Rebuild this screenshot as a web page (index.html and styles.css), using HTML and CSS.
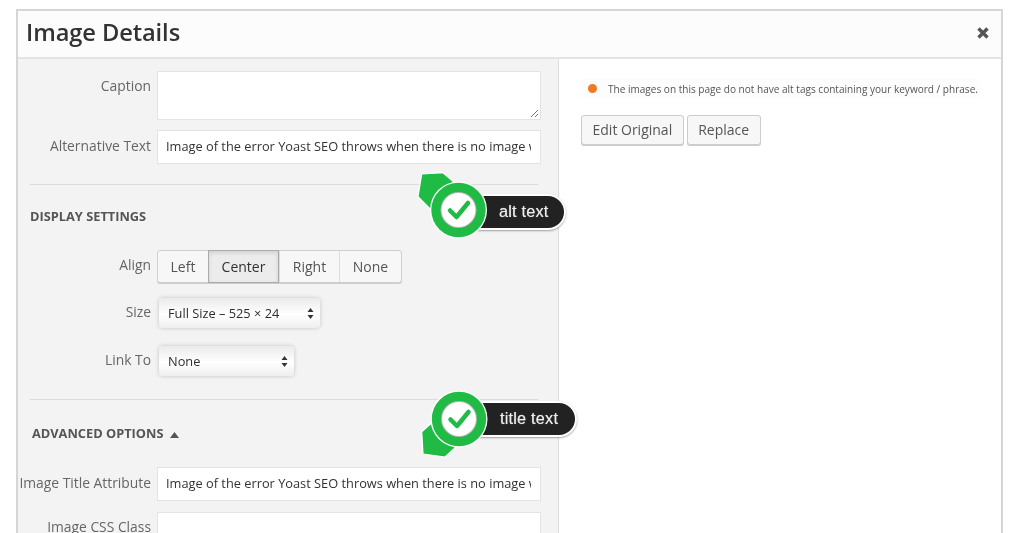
FILE: index.html
```html
<!DOCTYPE html>
<html lang="en">
<head>
<meta charset="utf-8">
<title>Image Details</title>
<link rel="stylesheet" href="styles.css">
</head>
<body>
<div class="modal">
  <header class="head">
    <h1>Image Details</h1>
    <svg class="close" width="14" height="14" viewBox="0 0 14 14"><path d="M2.500 2.500 11.500 11.500M11.500 2.500 2.500 11.500" fill="none" stroke="#555" stroke-width="3.400"/></svg>
  </header>
  <div class="body">
    <section class="left">
      <div class="row row-caption">
        <label class="label">Caption</label>
        <div class="field area">
          <svg class="grip" width="9" height="9" viewBox="0 0 9 9"><path d="M1 8 8 1M5 8 8 5" stroke="#777" stroke-width="1" fill="none"/></svg>
        </div>
      </div>
      <div class="row row-alt">
        <label class="label">Alternative Text</label>
        <div class="field input"><div class="clip">Image of the error Yoast SEO throws when there is no image with alt text</div></div>
      </div>
      <hr class="rule rule-a">
      <h2 class="section section-display">DISPLAY SETTINGS</h2>
      <div class="row row-align">
        <label class="label">Align</label>
        <div class="group">
          <span class="seg seg-left">Left</span>
          <span class="seg seg-center on">Center</span>
          <span class="seg seg-right">Right</span>
          <span class="seg seg-none">None</span>
        </div>
      </div>
      <div class="row row-size">
        <label class="label">Size</label>
        <div class="select select-size"><span>Full Size – 525 × 24</span>
          <svg width="7" height="11" viewBox="0 0 7 11"><path d="M3.500 0 6.500 4H.5ZM3.500 11 .5 7H6.500Z" fill="#333"/></svg>
        </div>
      </div>
      <div class="row row-link">
        <label class="label">Link To</label>
        <div class="select select-link"><span>None</span>
          <svg width="7" height="11" viewBox="0 0 7 11"><path d="M3.500 0 6.500 4H.5ZM3.500 11 .5 7H6.500Z" fill="#333"/></svg>
        </div>
      </div>
      <hr class="rule rule-b">
      <h2 class="section section-adv">ADVANCED OPTIONS <svg class="caret" width="9" height="6" viewBox="0 0 9 6"><path d="M4.500 0 9 6H0Z" fill="#555"/></svg></h2>
      <div class="row row-title">
        <label class="label">Image Title Attribute</label>
        <div class="field input"><div class="clip">Image of the error Yoast SEO throws when there is no image with alt text</div></div>
      </div>
      <div class="row row-css">
        <label class="label">Image CSS Class</label>
        <div class="field input"></div>
      </div>
    </section>
    <section class="right">
      <div class="notice"><i class="dot"></i><span>The images on this page do not have alt tags containing your keyword / phrase.</span></div>
      <div class="actions">
        <span class="btn">Edit Original</span>
        <span class="btn">Replace</span>
      </div>
    </section>
  </div>
  <div class="badge badge-alt">
    <svg width="150" height="76" viewBox="0 0 150 76">
      <path d="M5.700 2 27 .7 39 11 22 45 2 24.700Z" fill="#1fbb45" stroke="#fff" stroke-width="1.200" stroke-linejoin="round"/>
      <circle cx="42.500" cy="38" r="28.500" fill="#fff"/>
      <circle cx="42.500" cy="38" r="27.200" fill="#1fbb45"/>
      <circle cx="42.500" cy="38" r="18" fill="#b5b5b5"/>
      <circle cx="42.500" cy="38" r="17" fill="#fff"/>
      <path d="M34 38.500 40.500 45 52 31" fill="none" stroke="#1fbb45" stroke-width="4.500" stroke-linecap="round" stroke-linejoin="round"/>
    </svg>
    <span class="pill">alt text</span>
  </div>
  <div class="badge badge-title">
    <svg width="150" height="76" viewBox="0 0 150 76">
      <path d="M5.700 46.700 7 69 29 72 39 63 20 34Z" fill="#1fbb45" stroke="#fff" stroke-width="1.200" stroke-linejoin="round"/>
      <circle cx="43" cy="34" r="28.500" fill="#fff"/>
      <circle cx="43" cy="34" r="27.200" fill="#1fbb45"/>
      <circle cx="43" cy="34" r="18" fill="#b5b5b5"/>
      <circle cx="43" cy="34" r="17" fill="#fff"/>
      <path d="M34.500 34.500 41 41 52.500 27" fill="none" stroke="#1fbb45" stroke-width="4.500" stroke-linecap="round" stroke-linejoin="round"/>
    </svg>
    <span class="pill">title text</span>
  </div>
</div>
</body>
</html>
```
FILE: styles.css
```css
* { box-sizing: border-box; }
html, body { margin: 0; height: 533px; overflow: hidden; background: #fff; }
body { padding: 9px 21px 0 16px; font-family: "Open Sans", "Noto Sans", sans-serif; color: #555; }
.modal { position: relative; height: 524px; overflow: hidden; border: 1px solid #d6d6d6; border-width: 2px 2px 0 2px; background: #fff; filter: blur(0.4px); }
.head { height: 48px; background: #fcfcfc; border-bottom: 2px solid #e4e4e4; display: flex; align-items: center; justify-content: space-between; padding: 0 11px 4px 8px; }
.head h1 { margin: 0; font-size: 23.700px; font-weight: 600; color: #333; letter-spacing: -0.1px; }
.close { display: block; margin-top: 2px; }
.body { display: flex; height: 474px; }
.left { width: 541px; background: #f3f3f3; border-right: 1px solid #dedede; padding-top: 12px; }
.right { flex: 1; padding: 19px 0 0 21px; }
.row { display: grid; grid-template-columns: 133px auto; column-gap: 6px; justify-content: start; }
.label { font-size: 13.850px; line-height: 20px; color: #666; text-align: right; white-space: nowrap; }
.field { width: 384px; background: #fff; border: 1px solid #e3e3e3; }
.area { height: 49px; position: relative; }
.grip { position: absolute; right: 1px; bottom: 1px; }
.input { height: 34px; font-size: 12.800px; line-height: 30px; color: #333; padding: 0 9px 0 8px; }
.clip { overflow: hidden; white-space: nowrap; }
.row-caption .label { padding-top: 5px; }
.row-alt { margin-top: 10px; }
.row-alt .label, .row-title .label { padding-top: 6px; }
.rule { margin: 0; border: 0; height: 1px; background: #dcdcdc; width: 508px; }
.rule-a { margin: 20px 0 0 12px; }
.section { margin: 0; font-size: 12.800px; line-height: 18px; font-weight: 700; color: #555; }
.section-display { margin: 22px 0 0 12px; }
.row-align { margin-top: 25px; }
.row-align .label { padding-top: 5px; }
.group { display: flex; height: 33px; width: 245px; background: #f7f7f7; border: 1px solid #d0d0d0; border-radius: 3px; box-shadow: 0 1px 0 #ccc; font-size: 14px; line-height: 31px; color: #555; }
.seg { text-align: center; border-left: 1px solid #ddd; }
.seg-left { width: 50px; border-left: 0; }
.seg-center { width: 71px; }
.seg-right { width: 60px; }
.seg-none { flex: 1; }
.on { background: #ececec; border: 1px solid #aaa; margin: -1px 0; height: 33px; box-shadow: inset 0 2px 4px rgba(0,0,0,.12); color: #333; }
.select { height: 30px; margin-left: 2px; display: flex; align-items: center; justify-content: space-between; font-size: 12.800px; color: #2e2e2e; background: linear-gradient(#ebebeb, #fff 55%, #eee); border-radius: 4px; box-shadow: 0 0 4px rgba(0,0,0,.2); padding: 0 6px 0 9px; }
.select-size { width: 161px; }
.select-link { width: 135px; }
.row-size { margin-top: 15px; }
.row-size .label { padding-top: 4px; }
.row-link { margin-top: 18px; }
.row-link .label { padding-top: 4px; }
.rule-b { margin-top: 23px; margin-left: 12px; }
.section-adv { margin: 24px 0 0 14px; }
.caret { margin-left: 3px; }
.row-title { margin-top: 25px; }
.row-css { margin-top: 11px; }
.row-css .label { padding-top: 5px; }
.notice { display: flex; align-items: center; width: 400px; height: 21px; background: #fdfdfd; font-size: 10.050px; color: #555; white-space: nowrap; padding-left: 8px; }
.dot { width: 9px; height: 9px; border-radius: 50%; background: #f07a22; margin-right: 11px; flex: none; }
.actions { display: flex; gap: 3px; margin: 16px 0 0 1px; }
.btn { height: 30px; padding: 0 10.500px; border: 1px solid #ccc; border-radius: 3px; background: #f7f7f7; box-shadow: 0 1px 0 #ccc; font-size: 14px; line-height: 28px; color: #555; }
.badge { position: absolute; width: 170px; height: 76px; }
.badge svg { display: block; position: absolute; left: 0; top: 0; z-index: 1; }
.pill { position: absolute; height: 36px; border: 2px solid #fff; border-left: 0; border-radius: 0 18px 18px 0; background: #222; box-shadow: 0 1px 2px rgba(0,0,0,.35); color: #eee; font: 400 16.300px/31px "Liberation Sans", Arial, sans-serif; white-space: nowrap; letter-spacing: 0.2px; text-shadow: 0 0 1px rgba(255,255,255,.6); }
.badge-alt { left: 398px; top: 161px; }
.badge-alt .pill { left: 60px; top: 22px; width: 90px; padding-left: 23px; }
.badge-title { left: 398px; top: 374px; }
.badge-title .pill { left: 60px; top: 16px; width: 101px; padding-left: 24px; }
```
